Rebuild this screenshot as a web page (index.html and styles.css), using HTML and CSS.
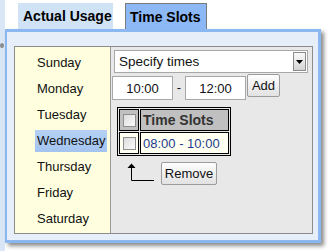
FILE: index.html
```html
<html lang="en">
<head>
<meta charset="UTF-8">
<title>Time Slots</title>
<link rel="stylesheet" href="styles.css">
</head>
<body>
<div class="window">
  <span class="grip"></span>
  <div class="tabs">
    <div class="tab">Actual Usage</div>
    <div class="tab active">Time Slots</div>
  </div>

  <div class="panel">
    <div class="box">
      <ul class="days">
        <li><span>Sunday</span></li>
        <li><span>Monday</span></li>
        <li><span>Tuesday</span></li>
        <li><span class="selected">Wednesday</span></li>
        <li><span>Thursday</span></li>
        <li><span>Friday</span></li>
        <li><span>Saturday</span></li>
      </ul>

      <div class="slots">
        <div class="select">
          <span class="select-text">Specify times</span>
          <span class="select-arrow">
            <svg width="7" height="4" viewBox="0 0 7 4"><path d="M0 0H7L3.5 4Z" fill="#000"/></svg>
          </span>
        </div>

        <div class="time-row">
          <input class="time" type="text" value="10:00">
          <span class="dash">-</span>
          <input class="time" type="text" value="12:00">
          <button class="btn btn-add">Add</button>
        </div>

        <table class="slot-table">
          <tr class="head">
            <td class="chk"><span class="checkbox"></span></td>
            <td class="title">Time Slots</td>
          </tr>
          <tr class="row">
            <td class="chk"><span class="checkbox"></span></td>
            <td class="time-cell">08:00 - 10:00</td>
          </tr>
        </table>

        <div class="remove-row">
          <svg class="arrow" width="28" height="20" viewBox="0 0 28 20">
            <path d="M4.5 4V17.5H27" fill="none" stroke="#000" stroke-width="1"/>
            <path d="M0.5 5H8.5L4.5 0.5Z" fill="#000"/>
          </svg>
          <button class="btn btn-remove">Remove</button>
        </div>
      </div>
    </div>
  </div>
</div>
</body>
</html>
```

FILE: styles.css
```css
body {
  margin: 0;
  background: #fff;
  font-family: "Liberation Sans", Arial, sans-serif;
  font-size: 13px;
  color: #111;
}
.window {
  position: relative;
  height: 251px;
  border-left: 5px solid #d9e6f5;
  box-sizing: border-box;
}
.grip {
  position: absolute;
  left: -5px;
  top: 43px;
  width: 4px;
  height: 5px;
  border-radius: 50%;
  background: #8a8a8a;
}
.tabs {
  display: flex;
  gap: 12px;
  padding: 3px 0 0 13px;
}
.tab {
  height: 26px;
  line-height: 27px;
  padding-left: 5px;
  width: 95px;
  box-sizing: border-box;
  white-space: nowrap;
  background: #d0e2f6;
  font-size: 14px;
  font-weight: bold;
  color: #000;
}
.tab.active {
  width: 82px;
  padding-left: 4px;
  background: #8cb8f6;
  border: 1px solid #7a7a7a;
  border-bottom: none;
  line-height: 26px;
}
.panel {
  width: 316px;
  box-sizing: border-box;
  background: #e6eef9;
  border: 3px solid #8cb8f2;
  border-left-width: 2px;
  padding: 14px 5px 6px 7px;
  box-shadow: 3px 3px 4px rgba(0,0,0,0.45);
}
.box {
  display: flex;
  height: 188px;
  box-sizing: border-box;
  border: 1px solid #8c8c8c;
  background: #e8e8e8;
}
.days {
  list-style: none;
  margin: 0;
  padding: 5px 0 0 20px;
  width: 96px;
  box-sizing: border-box;
  background: #ffffe0;
  border-right: 1px solid #9a9a9a;
}
.days li {
  height: 26px;
}
.days span {
  display: inline-block;
  height: 22px;
  line-height: 22px;
  padding: 0 2px;
}
.days .selected {
  background: linear-gradient(#b4d0f4, #a4c4f0);
}
.slots {
  flex: 1;
  padding: 3px 4px 0 1px;
}
.select {
  display: flex;
  align-items: center;
  margin-left: 2px;
  height: 23px;
  box-sizing: border-box;
  background: #fff;
  border: 1px solid #a8a8a8;
}
.select-text {
  flex: 1;
  padding-left: 4px;
  font-size: 13.5px;
}
.select-arrow {
  display: flex;
  align-items: center;
  justify-content: center;
  width: 13px;
  height: 19px;
  margin-right: 1px;
  box-sizing: border-box;
  border: 1px solid #8a8a8a;
  background: linear-gradient(#fafafa, #d4d4d4);
}
.time-row {
  display: flex;
  align-items: flex-start;
  margin-top: 3px;
}
.time {
  width: 61px;
  height: 24px;
  box-sizing: border-box;
  border: 1px solid #a8a8a8;
  padding: 0;
  font-family: inherit;
  font-size: 13px;
  color: #111;
  text-align: center;
  background: #fff;
}
.dash {
  width: 12px;
  line-height: 24px;
  text-align: center;
}
.btn {
  font-family: inherit;
  font-size: 13px;
  color: #111;
  padding: 0;
  border: 1px solid #9c9c9c;
  border-radius: 2px;
  background: linear-gradient(#fdfdfd, #e2e2e2);
}
.btn-add {
  width: 33px;
  height: 23px;
  margin-left: 1px;
  margin-top: -2px;
}
.slot-table {
  margin: 7px 0 0 5px;
  border: 1px solid #000;
  border-spacing: 1px;
  background: #e8e8e8;
  font-size: 13px;
}
.slot-table td {
  box-sizing: border-box;
  border: 1px solid #000;
  padding: 0;
  height: 22px;
  white-space: nowrap;
}
.slot-table .chk {
  width: 20px;
  text-align: center;
}
.head td {
  background: #c0c0c0;
}
.row td {
  background: #fffff2;
}
.title,
.time-cell {
  width: 89px;
  padding-left: 2px !important;
}
.title {
  font-size: 14px;
  font-weight: bold;
  color: #333;
}
.time-cell {
  color: #1d3c8c;
}
.checkbox {
  display: inline-block;
  width: 13px;
  height: 13px;
  box-sizing: border-box;
  border: 1px solid #8e8f8f;
  background: linear-gradient(135deg, #dcdcdc, #fbfbfb);
  vertical-align: middle;
}
.remove-row {
  display: flex;
  align-items: flex-start;
  margin: 6px 0 0 15px;
}
.arrow {
  margin-top: 1px;
}
.btn-remove {
  width: 56px;
  height: 23px;
  margin-left: 6px;
}
```
